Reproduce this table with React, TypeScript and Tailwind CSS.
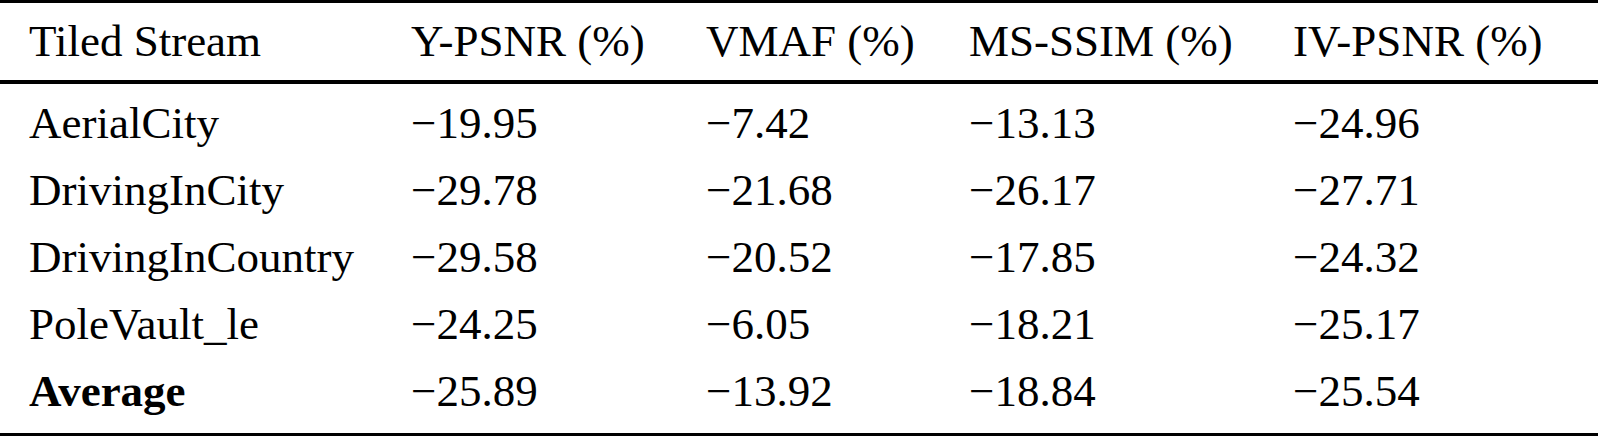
const headers = ["Tiled Stream", "Y-PSNR (%)", "VMAF (%)", "MS-SSIM (%)", "IV-PSNR (%)"]

const rows = [
  { name: "AerialCity", values: ["−19.95", "−7.42", "−13.13", "−24.96"] },
  { name: "DrivingInCity", values: ["−29.78", "−21.68", "−26.17", "−27.71"] },
  { name: "DrivingInCountry", values: ["−29.58", "−20.52", "−17.85", "−24.32"] },
  { name: "PoleVault_le", values: ["−24.25", "−6.05", "−18.21", "−25.17"] },
  { name: "Average", values: ["−25.89", "−13.92", "−18.84", "−25.54"], bold: true },
]

const grid = "grid grid-cols-[382px_295px_263px_324px_1fr] pl-[29px]"

export default function App() {
  return (
    <div
      className="w-[1598px] h-[436px] bg-white text-black text-[45px] leading-[67px]"
      style={{ fontFamily: '"Liberation Serif", "Times New Roman", serif' }}
    >
      <div className="border-t-[3px] border-b-[4px] border-black">
        <div className={`${grid} h-[77px] leading-[77px]`}>
          {headers.map((h) => (
            <div key={h} className="whitespace-nowrap">
              {h}
            </div>
          ))}
        </div>
      </div>

      <div className="pt-[6px] pb-[8px] border-b-[3px] border-black">
        {rows.map((row) => (
          <div key={row.name} className={`${grid} h-[67px]`}>
            <div className={row.bold ? "font-bold whitespace-nowrap" : "whitespace-nowrap"}>{row.name}</div>
            {row.values.map((v, i) => (
              <div key={i} className="whitespace-nowrap">
                {v}
              </div>
            ))}
          </div>
        ))}
      </div>
    </div>
  )
}
